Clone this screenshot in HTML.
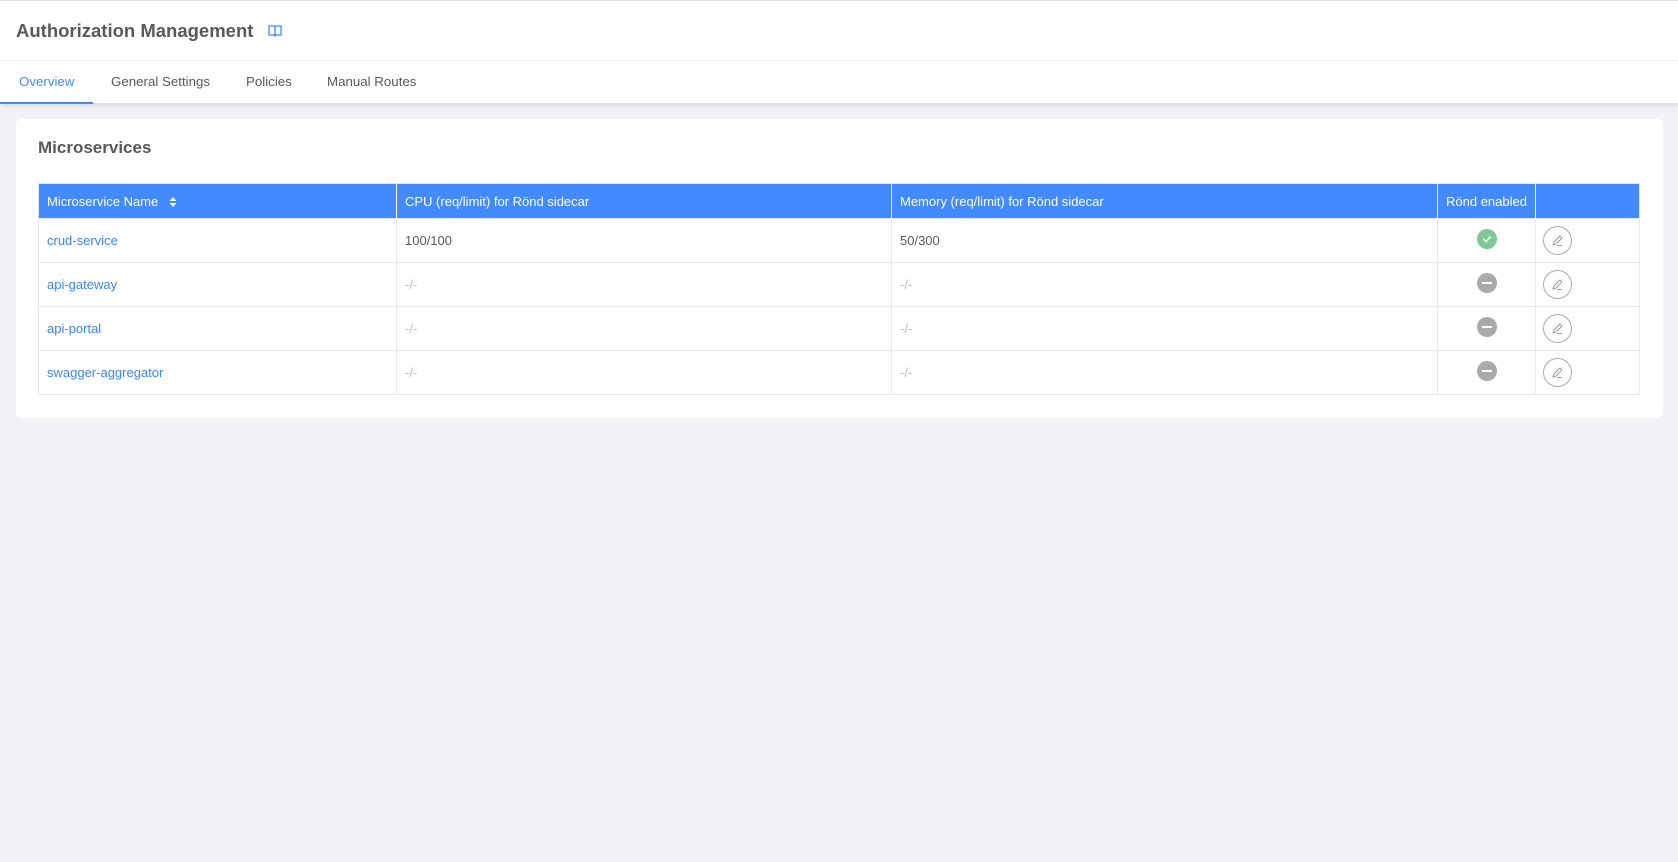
<!DOCTYPE html>
<html><head><meta charset="utf-8"><style>
*{box-sizing:border-box;margin:0;padding:0}
body{width:1678px;height:862px;background:#f0f2f5;font-family:"Liberation Sans",sans-serif;color:#595959;position:relative;overflow:hidden}
.hdr{position:absolute;left:0;top:0;width:1678px;height:103px;background:#fff;border-top:1px solid #ddd;box-shadow:0 2px 6px rgba(0,0,0,.12)}
.title{position:absolute;left:16px;top:19px;font-size:18.5px;font-weight:bold;color:#595959}
.div{position:absolute;left:0;top:59px;width:100%;height:1px;background:#eee}
.tab{position:absolute;top:73px;font-size:13.3px;color:#595959}
.ul{position:absolute;left:0;top:101px;width:93px;height:2px;background:#448aff}
.card{position:absolute;left:16px;top:119px;width:1647px;height:299px;background:#fff;border-radius:5px}
.h2{position:absolute;left:38px;top:138px;font-size:17px;font-weight:bold;color:#595959}
table{position:absolute;left:38px;top:183px;width:1602px;border-collapse:collapse;font-size:13px;border:1px solid #e6e6e6}
th{background:#448aff;color:#fff;font-weight:normal;text-align:left;height:35px;padding:0 8px;border-right:1px solid #fff}
td{height:44px;padding:0 8px;border-right:1px solid #e8e8e8;border-top:1px solid #e8e8e8}
td.n{color:#3d84f0}
td.d{color:#bbb}
.c{text-align:center}
.ok,.no{display:inline-block;width:20px;height:20px;border-radius:50%;vertical-align:middle;position:relative;top:-2px}
.ok{background:#7fc894}.no{background:#aaa}
.no:after{content:"";position:absolute;left:5px;top:9px;width:10px;height:2px;background:#fff}
.ed{display:inline-block;width:29px;height:29px;border:1px solid #aaa;border-radius:50%;vertical-align:middle;margin-left:-1px}
</style></head><body>
<div class="hdr">
<div class="title">Authorization Management</div>
<svg style="position:absolute;left:268px;top:24px" width="14" height="12" viewBox="0 0 14 12"><path d="M1 1h5l1 1 1-1h5v9H8l-1 1-1-1H1z M7 2v9" fill="none" stroke="#448aff" stroke-width="1.3"/></svg>
<div class="div"></div>
<div class="tab" style="left:19px;color:#448aff">Overview</div>
<div class="tab" style="left:111px">General Settings</div>
<div class="tab" style="left:246px">Policies</div>
<div class="tab" style="left:327px">Manual Routes</div>
<div class="ul"></div>
</div>
<div class="card"></div>
<div class="h2">Microservices</div>
<table>
<tr><th style="width:358px">Microservice Name <svg width="10" height="12" viewBox="0 0 10 12" style="vertical-align:middle;margin-left:6px"><path d="M5 1l3.5 4h-7zM5 11l3.5-4h-7z" fill="#fff"/></svg></th><th style="width:495px">CPU (req/limit) for Rönd sidecar</th><th style="width:546px">Memory (req/limit) for Rönd sidecar</th><th style="width:98px;text-align:center;padding:0">Rönd enabled</th><th style="border-right:none"></th></tr>
<tr><td class="n">crud-service</td><td>100/100</td><td>50/300</td><td class="c"><span class="ok"><svg width="20" height="20" viewBox="0 0 20 20"><path d="M6.5 10.2l2.4 2.4 4.6-5" fill="none" stroke="#fff" stroke-width="1.5"/></svg></span></td><td><span class="ed"><svg width="27" height="27" viewBox="0 0 27 27"><path d="M9 18l1-3 6-6 2 2-6 6zM13 18.5h5" fill="none" stroke="#999" stroke-width="1"/></svg></span></td></tr>
<tr><td class="n">api-gateway</td><td class="d">-/-</td><td class="d">-/-</td><td class="c"><span class="no"></span></td><td><span class="ed"><svg width="27" height="27" viewBox="0 0 27 27"><path d="M9 18l1-3 6-6 2 2-6 6zM13 18.5h5" fill="none" stroke="#999" stroke-width="1"/></svg></span></td></tr>
<tr><td class="n">api-portal</td><td class="d">-/-</td><td class="d">-/-</td><td class="c"><span class="no"></span></td><td><span class="ed"><svg width="27" height="27" viewBox="0 0 27 27"><path d="M9 18l1-3 6-6 2 2-6 6zM13 18.5h5" fill="none" stroke="#999" stroke-width="1"/></svg></span></td></tr>
<tr><td class="n">swagger-aggregator</td><td class="d">-/-</td><td class="d">-/-</td><td class="c"><span class="no"></span></td><td><span class="ed"><svg width="27" height="27" viewBox="0 0 27 27"><path d="M9 18l1-3 6-6 2 2-6 6zM13 18.5h5" fill="none" stroke="#999" stroke-width="1"/></svg></span></td></tr>
</table>
</body></html>
